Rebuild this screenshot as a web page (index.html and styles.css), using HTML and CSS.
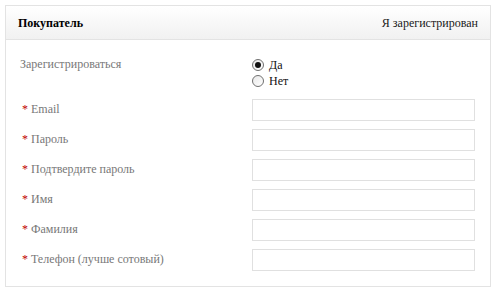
FILE: index.html
```html
<!DOCTYPE html>
<html lang="ru">
<head>
  <meta charset="UTF-8">
  <title>Покупатель</title>
  <link rel="stylesheet" href="styles.css">
</head>
<body>
  <div class="panel">
    <div class="panel-head">
      <span class="panel-title">Покупатель</span>
      <span class="panel-link">Я зарегистрирован</span>
    </div>
    <form class="panel-body">
      <div class="row row-radio">
        <span class="label">Зарегистрироваться</span>
        <div class="radios">
          <label class="radio"><input type="radio" name="reg" checked> Да</label>
          <label class="radio"><input type="radio" name="reg"> Нет</label>
        </div>
      </div>
      <div class="row">
        <label class="label" for="email"><span class="req">*</span>Email</label>
        <input class="field" type="text" id="email">
      </div>
      <div class="row">
        <label class="label" for="pass"><span class="req">*</span>Пароль</label>
        <input class="field" type="password" id="pass">
      </div>
      <div class="row">
        <label class="label" for="pass2"><span class="req">*</span>Подтвердите пароль</label>
        <input class="field" type="password" id="pass2">
      </div>
      <div class="row">
        <label class="label" for="name"><span class="req">*</span>Имя</label>
        <input class="field" type="text" id="name">
      </div>
      <div class="row">
        <label class="label" for="surname"><span class="req">*</span>Фамилия</label>
        <input class="field" type="text" id="surname">
      </div>
      <div class="row">
        <label class="label" for="phone"><span class="req">*</span>Телефон (лучше сотовый)</label>
        <input class="field" type="text" id="phone">
      </div>
    </form>
  </div>
</body>
</html>
```

FILE: styles.css
```css
body {
  font-family: "Liberation Serif", "Times New Roman", serif;
  font-size: 12px;
  margin: 0;
  padding: 5px;
  background: #fff;
}

.panel {
  width: 486px;
  box-sizing: border-box;
  border: 1px solid #e3e3e3;
}

.panel-head {
  display: flex;
  justify-content: space-between;
  align-items: center;
  height: 34px;
  box-sizing: border-box;
  padding: 2px 12px 0 12px;
  background: linear-gradient(#ffffff, #f1f1f1);
  border-bottom: 1px solid #e3e3e3;
}

.panel-title {
  font-weight: bold;
  color: #000;
}

.panel-link {
  color: #1a1a1a;
}

.panel-body {
  display: flex;
  flex-direction: column;
  gap: 8px;
  padding: 17px 14px 15px 14px;
  margin: 0;
}

.row {
  display: flex;
  align-items: center;
  height: 22px;
}

.row-radio {
  align-items: flex-start;
  height: 28px;
  margin-bottom: 6px;
}

.label {
  width: 232px;
  flex: none;
  padding-bottom: 2px;
  color: #787878;
}

.row-radio .label {
  line-height: 14px;
  padding-bottom: 0;
}

.req {
  color: #c00000;
  margin: 0 3px 0 2px;
}

.radios {
  display: flex;
  flex-direction: column;
}

.radio {
  display: flex;
  align-items: center;
  height: 16px;
  color: #111;
}

.radio input {
  appearance: none;
  width: 12px;
  height: 12px;
  margin: 0 5px 0 0;
  border: 1px solid #707070;
  border-radius: 50%;
  background: linear-gradient(135deg, #e8e8e8, #ffffff);
  box-sizing: border-box;
  position: relative;
}

.radio input:checked::after {
  content: "";
  position: absolute;
  left: 2px;
  top: 2px;
  width: 6px;
  height: 6px;
  border-radius: 50%;
  background: #111;
}

.field {
  width: 223px;
  height: 22px;
  box-sizing: border-box;
  margin: 0;
  padding: 2px 4px;
  border: 1px solid #e0e0e0;
  background: #fff;
  font: inherit;
}
```
